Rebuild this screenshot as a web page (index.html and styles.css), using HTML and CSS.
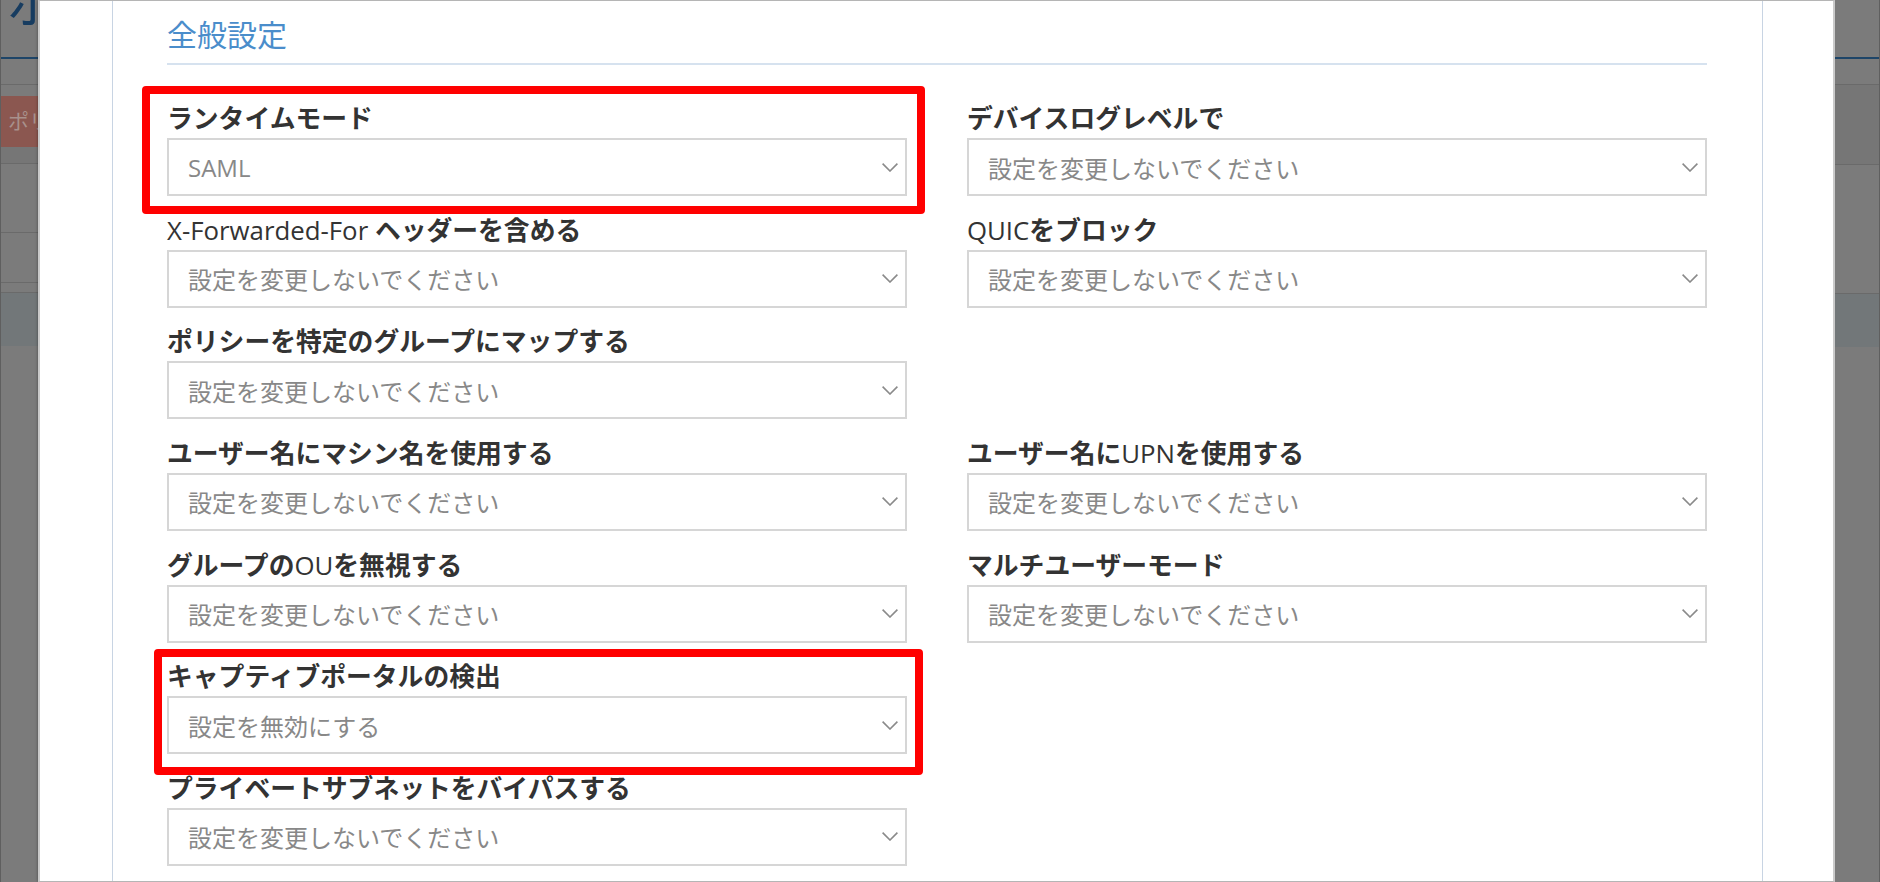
FILE: index.html
```html
<!DOCTYPE html>
<html lang="ja">
<head>
  <meta charset="UTF-8">
  <title>全般設定</title>
  <link rel="stylesheet" href="styles.css">
</head>
<body>
  <div class="backdrop backdrop-left">
    <div class="bg-title"><span>ポ</span></div>
    <div class="bg-rule-blue"></div>
    <div class="bg-gap h25"></div>
    <div class="bg-line"></div>
    <div class="bg-gap h11"></div>
    <div class="bg-alert">ポリ</div>
    <div class="bg-gap h16 dim"></div>
    <div class="bg-line"></div>
    <div class="bg-gap h68"></div>
    <div class="bg-line"></div>
    <div class="bg-gap h49"></div>
    <div class="bg-line"></div>
    <div class="bg-gap h9"></div>
    <div class="bg-line"></div>
    <div class="bg-blue"></div>
  </div>

  <div class="modal">
    <div class="panel">
      <h2 class="section-title">全般設定</h2>

      <div class="grid">
        <div class="field">
          <label>ランタイムモード</label>
          <div class="select"><span>SAML</span><svg width="16" height="9" viewBox="0 0 16 9"><polyline points="0.6,0.6 8,8 15.4,0.6"/></svg></div>
        </div>
        <div class="field">
          <label>デバイスログレベルで</label>
          <div class="select"><span>設定を変更しないでください</span><svg width="16" height="9" viewBox="0 0 16 9"><polyline points="0.6,0.6 8,8 15.4,0.6"/></svg></div>
        </div>

        <div class="field">
          <label><span class="latin">X-Forwarded-For</span> ヘッダーを含める</label>
          <div class="select"><span>設定を変更しないでください</span><svg width="16" height="9" viewBox="0 0 16 9"><polyline points="0.6,0.6 8,8 15.4,0.6"/></svg></div>
        </div>
        <div class="field">
          <label><span class="latin">QUIC</span>をブロック</label>
          <div class="select"><span>設定を変更しないでください</span><svg width="16" height="9" viewBox="0 0 16 9"><polyline points="0.6,0.6 8,8 15.4,0.6"/></svg></div>
        </div>

        <div class="field">
          <label>ポリシーを特定のグループにマップする</label>
          <div class="select"><span>設定を変更しないでください</span><svg width="16" height="9" viewBox="0 0 16 9"><polyline points="0.6,0.6 8,8 15.4,0.6"/></svg></div>
        </div>
        <div class="field empty"></div>

        <div class="field">
          <label>ユーザー名にマシン名を使用する</label>
          <div class="select"><span>設定を変更しないでください</span><svg width="16" height="9" viewBox="0 0 16 9"><polyline points="0.6,0.6 8,8 15.4,0.6"/></svg></div>
        </div>
        <div class="field">
          <label>ユーザー名に<span class="latin">UPN</span>を使用する</label>
          <div class="select"><span>設定を変更しないでください</span><svg width="16" height="9" viewBox="0 0 16 9"><polyline points="0.6,0.6 8,8 15.4,0.6"/></svg></div>
        </div>

        <div class="field">
          <label>グループの<span class="latin">OU</span>を無視する</label>
          <div class="select"><span>設定を変更しないでください</span><svg width="16" height="9" viewBox="0 0 16 9"><polyline points="0.6,0.6 8,8 15.4,0.6"/></svg></div>
        </div>
        <div class="field">
          <label>マルチユーザーモード</label>
          <div class="select"><span>設定を変更しないでください</span><svg width="16" height="9" viewBox="0 0 16 9"><polyline points="0.6,0.6 8,8 15.4,0.6"/></svg></div>
        </div>

        <div class="field">
          <label>キャプティブポータルの検出</label>
          <div class="select"><span>設定を無効にする</span><svg width="16" height="9" viewBox="0 0 16 9"><polyline points="0.6,0.6 8,8 15.4,0.6"/></svg></div>
        </div>
        <div class="field empty"></div>

        <div class="field">
          <label>プライベートサブネットをバイパスする</label>
          <div class="select"><span>設定を変更しないでください</span><svg width="16" height="9" viewBox="0 0 16 9"><polyline points="0.6,0.6 8,8 15.4,0.6"/></svg></div>
        </div>
        <div class="field empty"></div>
      </div>
    </div>
  </div>

  <div class="backdrop backdrop-right">
    <div class="bg-gap h57"></div>
    <div class="bg-rule-blue"></div>
    <div class="bg-gap h25"></div>
    <div class="bg-line"></div>
    <div class="bg-gap h79 dim"></div>
    <div class="bg-line"></div>
    <div class="bg-gap h128"></div>
    <div class="bg-line"></div>
    <div class="bg-blue"></div>
  </div>

  <div class="mark mark-runtime"></div>
  <div class="mark mark-portal"></div>
</body>
</html>
```

FILE: styles.css
```css
body {
  margin: 0;
  height: 882px;
  overflow: hidden;
  display: flex;
  position: relative;
  background: #7b7b7b;
  font-family: 'Open Sans', 'Noto Sans CJK JP', sans-serif;
}

/* dimmed page behind the dialog */
.backdrop {
  height: 100%;
  box-sizing: border-box;
  overflow: hidden;
  background: #7b7b7b;
}

.backdrop-left {
  width: 38px;
  flex: none;
  border-left: 1px solid #5f5f5f;
}

.backdrop-right {
  flex: 1;
  border-right: 1px solid #5f5f5f;
}

.bg-title {
  height: 57px;
  overflow: hidden;
}

.bg-title span {
  display: block;
  margin: -30px 0 0 6px;
  font-size: 52px;
  line-height: 66px;
  color: #173c60;
}

.bg-rule-blue {
  height: 2px;
  background: #1e4568;
}

.bg-line {
  height: 1px;
  background: #6a6a6a;
}

.bg-gap.dim { background: #767676; }
.h9 { height: 9px; }
.h11 { height: 11px; }
.h16 { height: 16px; }
.h25 { height: 25px; }
.h49 { height: 49px; }
.h57 { height: 57px; }
.h68 { height: 68px; }
.h79 { height: 79px; }
.h128 { height: 128px; }

.bg-alert {
  height: 51px;
  background: #8b5750;
  color: #a8918c;
  font-size: 21px;
  line-height: 51px;
  padding-left: 7px;
  white-space: nowrap;
}

.bg-blue {
  height: 53px;
  background: #727779;
}

/* dialog */
.modal {
  width: 1797px;
  flex: none;
  height: 100%;
  box-sizing: border-box;
  background: #fff;
  border: 1px solid #b5b5b5;
  border-left: 2px solid #cacaca;
  border-right: 2px solid #cacaca;
  padding: 0 70px 0 72px;
  box-shadow: 0 0 3px rgba(0, 0, 0, 0.4);
}

.panel {
  height: 100%;
  box-sizing: border-box;
  border-left: 1px solid #c8d4e3;
  border-right: 1px solid #c8d4e3;
  padding: 0 55px 0 54px;
}

.section-title {
  margin: 0;
  padding: 14px 0 8px;
  font-size: 30px;
  line-height: 40px;
  font-weight: 400;
  color: #4a8dcb;
  border-bottom: 2px solid #d6e2ef;
}

.grid {
  margin-top: 36px;
  display: grid;
  grid-template-columns: 740px 740px;
  column-gap: 60px;
  row-gap: 16.67px;
}

.field label {
  display: block;
  height: 34px;
  margin-bottom: 3px;
  font-size: 25.8px;
  line-height: 34px;
  font-weight: 700;
  color: #333;
  white-space: nowrap;
}

.field label .latin {
  font-weight: 400;
}

.select {
  height: 58px;
  box-sizing: border-box;
  border: 2px solid #d6d6d6;
  background: #fff;
  display: flex;
  align-items: center;
  justify-content: space-between;
  padding: 0 7px 0 19px;
  font-size: 24px;
  color: #888;
}

.select svg polyline {
  fill: none;
  stroke: #8a8a8a;
  stroke-width: 1.6;
}

/* red highlight annotations drawn over the dialog */
.mark {
  position: absolute;
  box-sizing: border-box;
  border: 8px solid #ff0000;
  border-radius: 4px;
}

.mark-runtime {
  left: 142px;
  top: 86px;
  width: 783px;
  height: 128px;
}

.mark-portal {
  left: 154px;
  top: 649px;
  width: 769px;
  height: 126px;
}
```
